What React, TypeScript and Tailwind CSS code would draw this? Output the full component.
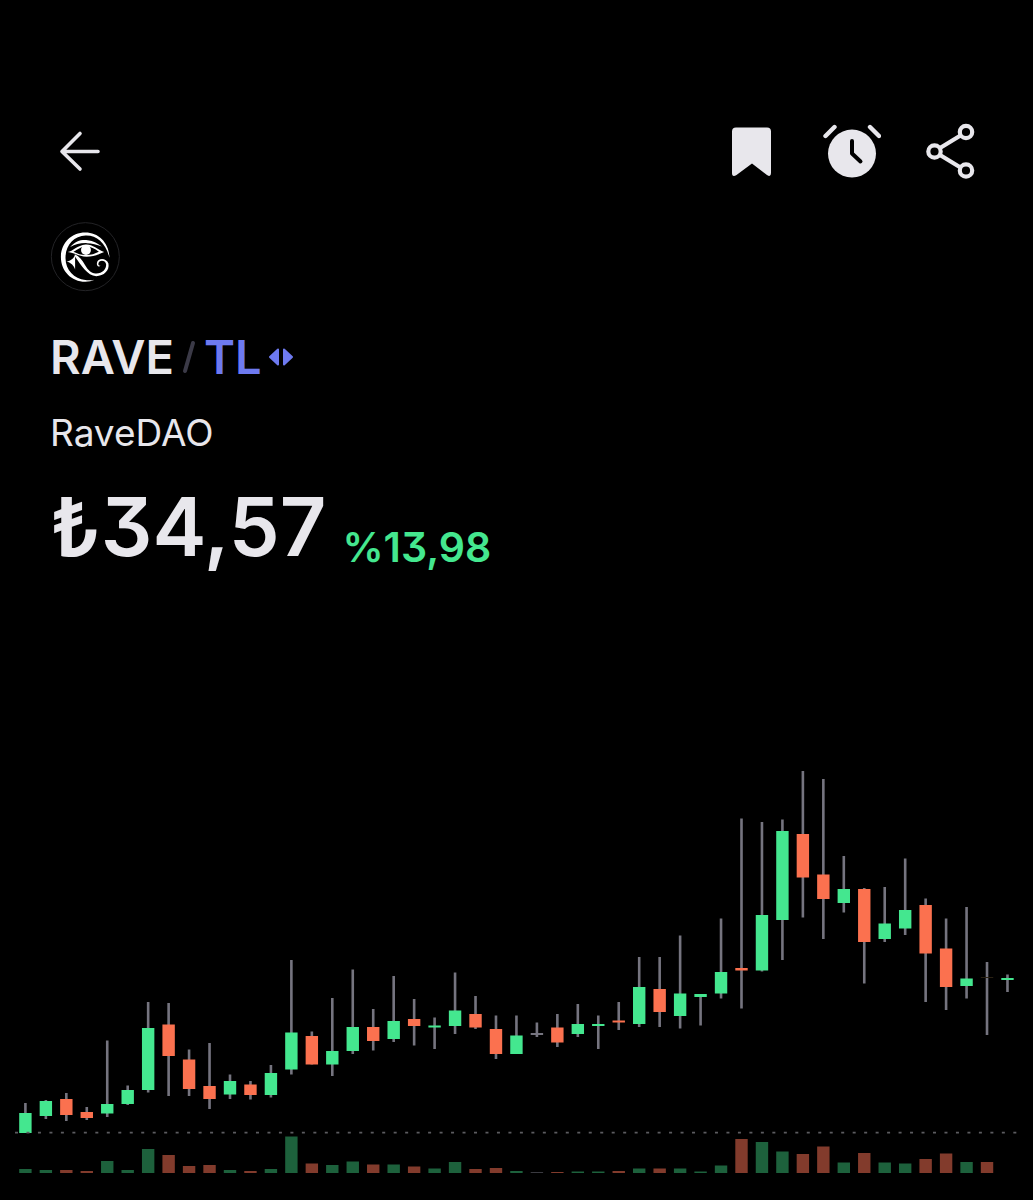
type Tone = 'up' | 'down' | 'flat' | 'faint';

// high, body top, body bottom, low, tone, volume height
type Candle = [number, number, number, number, Tone, number];

const candles: Candle[] = [
  [343, 353, 373, 373, 'up', 4],
  [340, 341, 356, 359, 'up', 3],
  [333, 339, 355, 361, 'down', 3],
  [347, 352, 358, 360, 'down', 2],
  [280.5, 344, 353.5, 357, 'up', 12],
  [325.5, 330, 344, 345, 'up', 3],
  [242, 268, 330, 332.5, 'up', 24],
  [243, 264.5, 296, 336, 'down', 18],
  [289.5, 299.5, 329, 336, 'down', 7],
  [283, 326, 339, 349, 'down', 8],
  [314.5, 321, 334.5, 339, 'up', 3],
  [321, 324.5, 335, 339.5, 'down', 2],
  [305, 313, 335, 337.5, 'up', 4],
  [200, 272.5, 309.5, 314.5, 'up', 36.5],
  [271.5, 276, 304.5, 304.5, 'down', 9.5],
  [238, 291, 304.5, 316, 'up', 8],
  [209.5, 267, 291, 294, 'up', 11.5],
  [249, 267, 281, 290.5, 'down', 8.5],
  [216, 261, 279, 282, 'up', 8.5],
  [239, 259, 266, 285.5, 'down', 6.5],
  [257.5, 265.5, 267.5, 289, 'up', 4.5],
  [212.5, 250.5, 266, 274, 'up', 11],
  [236, 254, 267.5, 269, 'down', 4],
  [255.5, 269, 294, 299, 'down', 5],
  [255.5, 275.5, 294, 294, 'up', 2],
  [262.5, 273, 275, 277, 'flat', 1],
  [254, 267.5, 282.5, 287, 'down', 1],
  [244, 264, 274, 277, 'up', 1.5],
  [255.5, 264, 266, 289, 'up', 1.5],
  [242, 260.5, 262.5, 270, 'down', 2],
  [197, 227, 264, 267, 'up', 4.5],
  [197, 229, 252, 267, 'down', 4.5],
  [175.5, 233.5, 256, 268.5, 'up', 4.5],
  [234, 234, 237, 265.5, 'up', 1.5],
  [158.5, 212, 233.5, 238.5, 'up', 7.5],
  [58.5, 208, 210.5, 248.5, 'down', 34],
  [62, 155, 210.5, 211.5, 'up', 31],
  [59.5, 71, 160, 200, 'up', 21.5],
  [11, 74, 117.5, 157.5, 'down', 19],
  [19, 114.5, 139, 179, 'down', 26.5],
  [96, 129, 143, 152.5, 'up', 10.5],
  [128, 129, 182, 223.5, 'down', 20],
  [127, 163.5, 179, 182, 'up', 10.5],
  [98.5, 150, 168.5, 175, 'up', 9.5],
  [138.5, 145, 193.5, 242, 'down', 14],
  [158.5, 188.5, 227, 250, 'down', 19.5],
  [147, 218.5, 226, 238.5, 'up', 11],
  [202, 217, 218, 275, 'faint', 11],
  [214.5, 218, 220, 232, 'up', 0],
];

const bodyColor: Record<Tone, string> = {
  up: '#44e78f',
  down: '#fb714f',
  flat: '#75747f',
  faint: '#2a2113',
};

const volumeColor: Record<Tone, string> = {
  up: '#1d613c',
  down: '#823b2c',
  flat: '#3a3a40',
  faint: '#823b2c',
};

function CandleChart() {
  return (
    <svg viewBox="0 0 1033 440" className="block w-full" role="img" aria-label="RAVE / TL">
      {candles.map(([high, top, bottom, low, tone, volume], i) => {
        const x = 25.4 + i * 20.46;
        return (
          <g key={i}>
            <rect x={x - 1.3} y={high} width={2.6} height={low - high} fill="#75747f" />
            <rect x={x - 6.2} y={top} width={12.4} height={bottom - top} fill={bodyColor[tone]} />
            <rect x={x - 6.2} y={413 - volume} width={12.4} height={volume} fill={volumeColor[tone]} />
          </g>
        );
      })}
      <line x1="15" x2="1017" y1="372.7" y2="372.7" stroke="#5c5c60" strokeWidth="1.8" strokeDasharray="3 8.475" />
    </svg>
  );
}

function EyeLogo() {
  return (
    <svg viewBox="30 34 212 212" className="size-[70px]" fill="none" role="img" aria-label="RaveDAO">
      <circle cx="137" cy="139" r="103" stroke="#232326" strokeWidth="3" />
      <path
        d="M210 142C209 97 177 66 137 66C94 66 63 99 63 140C63 182 94 215 137 215C147 215 157 213 165 209C154 211 145 211 137 210C103 207 77 179 77 144C76 105 102 76 138 75C172 74 199 98 210 142Z"
        fill="#fff"
      />
      <path d="M91 110C108 91 124 87 144 89C161 91 176 99 187 108C171 102 158 98 142 98C123 97 107 102 91 110Z" fill="#fff" />
      <path
        fillRule="evenodd"
        d="M84 125C99 122 112 105 138 102C159 101 173 116 194 125C173 134 160 139 141 139C119 139 104 127 84 125ZM101 124C114 130 123 134 139 134C155 134 166 130 178 124C165 114 154 108 138 108C122 108 114 118 101 124Z"
        fill="#fff"
      />
      <circle cx="139" cy="119" r="15" fill="#fff" />
      <path d="M106 134L106 178C102 167 95 158 80 154C94 151 101 145 106 134Z" fill="#fff" />
      <path
        d="M105 132C118 138 128 150 136 164C145 180 154 188 168 190C188 191 201 177 200 162C198 150 181 148 177 158C175 164 179 168 184 166C177 173 171 167 172 158C174 142 201 141 207 160C211 181 193 198 170 198C143 197 125 166 105 138Z"
        fill="#fff"
      />
    </svg>
  );
}

const iconButton = 'flex size-16 items-center justify-center';

export default function App() {
  return (
    <main className="min-h-screen bg-black pt-[120px] font-[Inter,sans-serif] text-[#e8e7ec]">
      <header className="flex items-center justify-between pr-[50px] pl-12">
        <button type="button" aria-label="Back" className={iconButton}>
          <svg viewBox="0 0 60 60" className="size-[60px]" fill="none" stroke="currentColor" strokeWidth="3.6" strokeLinecap="round" strokeLinejoin="round">
            <path d="M48 29.5H12M30 11.5L12 29.5L30 47" />
          </svg>
        </button>
        <div className="flex gap-9">
          <button type="button" aria-label="Bookmark" className={iconButton}>
            <svg viewBox="0 0 60 60" className="size-[60px]" fill="currentColor">
              <path d="M15 5.5H46Q50 5.5 50 9.5V51Q50 55.5 46 53L31 41.5L15.5 53Q11 55.5 11 51V9.5Q11 5.5 15 5.5Z" />
            </svg>
          </button>
          <button type="button" aria-label="Price alert" className={iconButton}>
            <svg viewBox="0 0 60 60" className="size-[60px]" fill="none">
              <circle cx="31" cy="31.6" r="24" fill="currentColor" />
              <path d="M31 19V31.5L39.5 39.5" stroke="#000" strokeWidth="4" strokeLinecap="round" strokeLinejoin="round" />
              <path d="M4.5 14L13.5 5M49 5L58 14" stroke="currentColor" strokeWidth="4.4" strokeLinecap="round" />
            </svg>
          </button>
          <button type="button" aria-label="Share" className={iconButton}>
            <svg viewBox="0 0 60 60" className="size-[60px]" fill="none" stroke="currentColor" strokeWidth="4.2">
              <circle cx="13.5" cy="29.5" r="6.2" />
              <circle cx="45" cy="10" r="6.2" />
              <circle cx="45" cy="48.5" r="6.2" />
              <path d="M19 26L39.5 13.5M19 33L39.5 45.5" />
            </svg>
          </button>
        </div>
      </header>

      <section className="px-[50px] pt-[38px]">
        <EyeLogo />
        <div className="mt-[35px] flex items-center text-[47px] leading-[60px] font-semibold">
          <h1>RAVE</h1>
          <svg viewBox="0 0 14 36" className="mx-2 h-9 w-[14px]" fill="none" stroke="#3b3a47" strokeWidth="4" strokeLinecap="round">
            <path d="M3 32L11 4" />
          </svg>
          <button type="button" className="flex items-center gap-1.5 text-[#6e7af0]">
            TL
            <svg viewBox="0 0 26 20" className="h-5 w-[26px]" fill="currentColor" stroke="currentColor" strokeWidth="2" strokeLinejoin="round">
              <path d="M10 2.5V17.5L2 10ZM16 2.5V17.5L24 10Z" />
            </svg>
          </button>
        </div>
        <p className="mt-5 text-[37px] leading-[52px]">RaveDAO</p>
        <p className="mt-5 flex items-end gap-4 font-semibold [font-feature-settings:'cv09']">
          <span className="text-[81px] leading-[96px]">₺34,57</span>
          <span className="text-[41px] leading-[56px] text-[#44e78f]">%13,98</span>
        </p>
      </section>

      <section className="mt-[185px]">
        <CandleChart />
      </section>
    </main>
  );
}
